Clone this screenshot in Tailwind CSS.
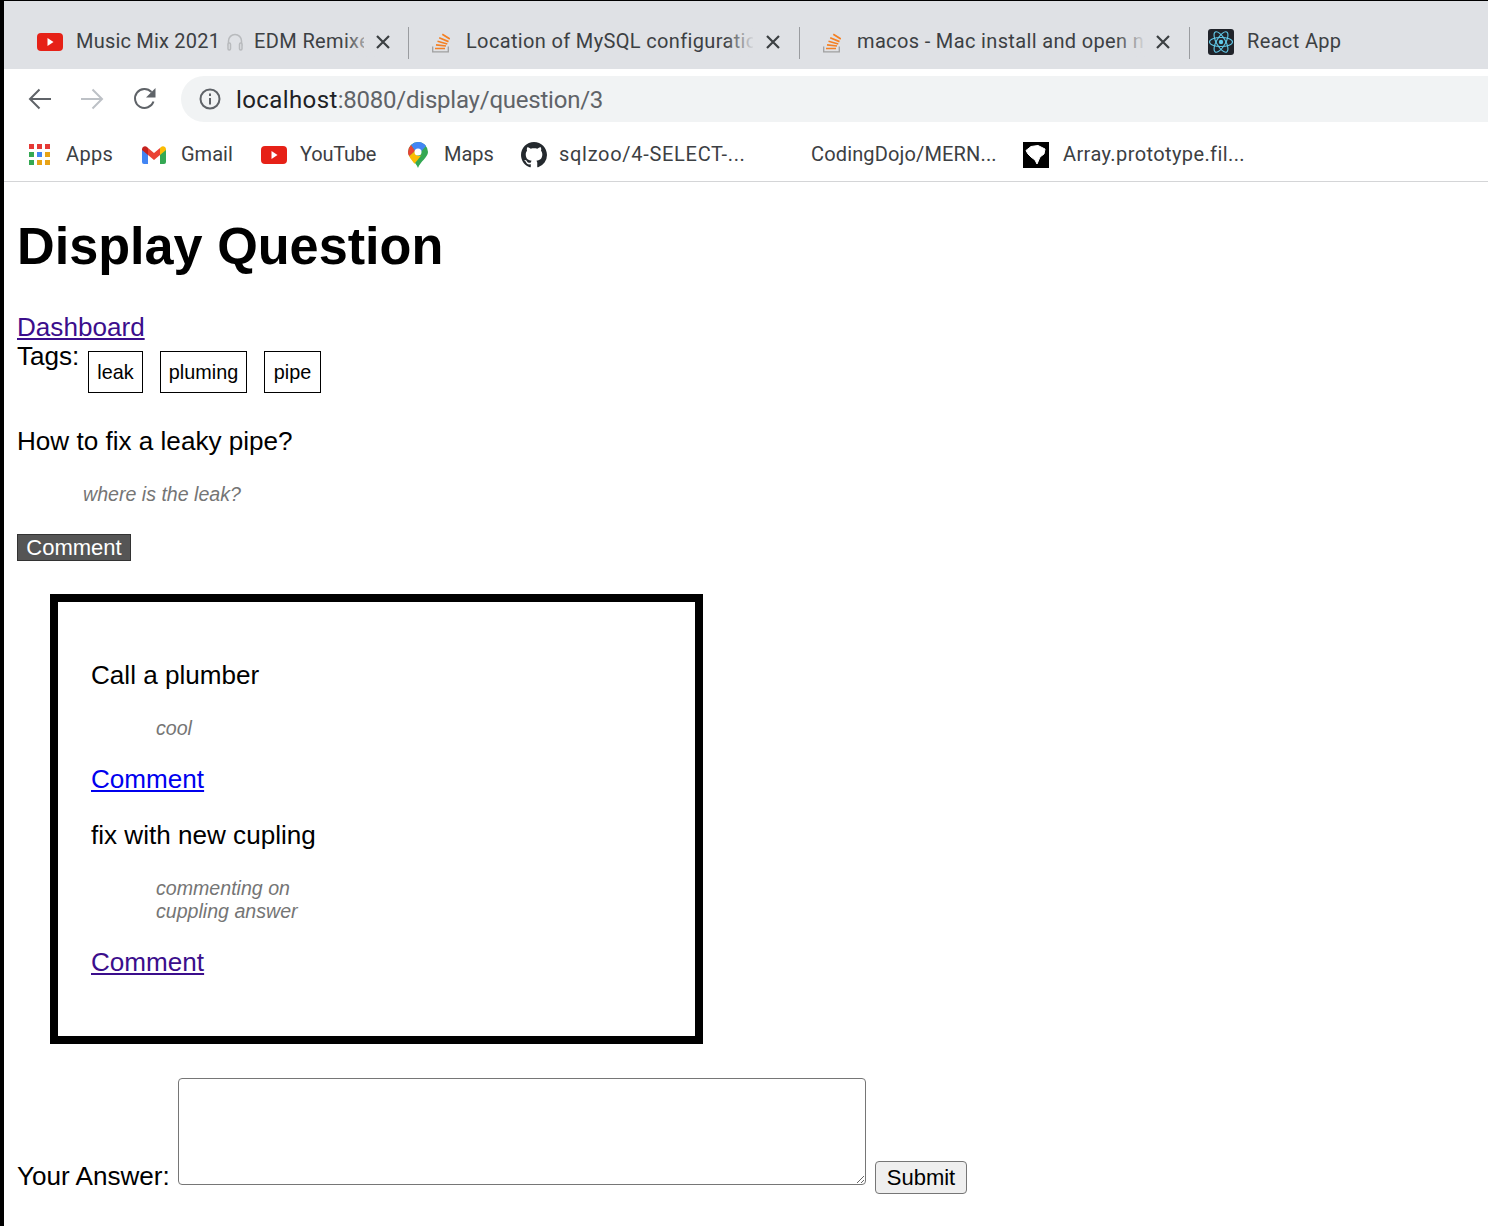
<!DOCTYPE html>
<html lang="en">
<head>
  <meta charset="UTF-8">
  <title>Display Question</title>
  <script src="https://cdn.jsdelivr.net/npm/@tailwindcss/browser@4"></script>
</head>
<body class="bg-black overflow-hidden">
  <div class="w-[1488px] h-[1226px] pl-1 pt-px">
    <div class="bg-white h-[1225px] overflow-hidden">
      <!-- tab strip -->
      <div class="h-[68px] bg-[#dfe1e5] flex pt-[26px] pl-[14px] font-['Roboto',sans-serif] text-[20px] text-[#3c4043] tracking-[0.35px]">
        <div class="w-[391px] h-[32px] shrink-0 flex items-center border-r border-[#9a9ca0] pl-[19px] pb-[2px] relative">
          <svg class="w-[26px] h-[18px] shrink-0" viewBox="0 0 26 18"><rect width="26" height="18" rx="4" fill="#e62117"/><path d="M10.500 5l6 4-6 4z" fill="#fff"/></svg>
          <span class="ml-[13px] mb-[2px] whitespace-nowrap tracking-[0.2px]">Music Mix 2021</span>
          <svg class="w-[18px] h-[20px] ml-[6px] shrink-0" viewBox="0 0 18 20" fill="none" stroke="#b8babd" stroke-width="1.500"><path d="M2.500 14V9a6.500 6.500 0 0113 0v5"/><rect x="2" y="11" width="2.500" height="7" rx="1.200" fill="#dfe1e5"/><rect x="13.500" y="11" width="2.500" height="7" rx="1.200" fill="#dfe1e5"/></svg>
          <span class="ml-[10px] mb-[2px] w-[110px] overflow-hidden whitespace-nowrap">EDM Remixes</span>
          <div class="absolute left-[326px] top-0 h-full w-[32px] bg-linear-to-r from-transparent to-[#dfe1e5]"></div>
          <svg class="absolute left-[358px] top-[8px] w-[14px] h-[14px]" viewBox="0 0 14 14" stroke="#3c4043" stroke-width="2.200"><path d="M1 1l12 12M13 1L1 13"/></svg>
        </div>
        <div class="w-[391px] h-[32px] shrink-0 flex items-center border-r border-[#9a9ca0] pl-[23px] pb-[2px] relative">
          <svg class="w-[18px] h-[22px] shrink-0" viewBox="0 0 18 22" fill="none"><path d="M.7 15.500v5.300h15.600v-5.300" stroke="#a0a0a0" stroke-width="1.300"/><path d="M3 17.500h10M4 13.800l10 1.200M5.500 10.300l9.800 2.700M7.200 6.800l9.300 3.800M10.300 3.300l7.500 4.700" stroke="#f48024" stroke-width="1.700"/></svg>
          <span class="ml-[16px] mb-[2px] w-[287px] overflow-hidden whitespace-nowrap">Location of MySQL configuration</span>
          <div class="absolute left-[316px] top-0 h-full w-[30px] bg-linear-to-r from-transparent to-[#dfe1e5]"></div>
          <svg class="absolute left-[357px] top-[8px] w-[14px] h-[14px]" viewBox="0 0 14 14" stroke="#3c4043" stroke-width="2.200"><path d="M1 1l12 12M13 1L1 13"/></svg>
        </div>
        <div class="w-[390px] h-[32px] shrink-0 flex items-center border-r border-[#9a9ca0] pl-[23px] pb-[2px] relative">
          <svg class="w-[18px] h-[22px] shrink-0" viewBox="0 0 18 22" fill="none"><path d="M.7 15.500v5.300h15.600v-5.300" stroke="#a0a0a0" stroke-width="1.300"/><path d="M3 17.500h10M4 13.800l10 1.200M5.500 10.300l9.800 2.700M7.200 6.800l9.300 3.800M10.300 3.300l7.500 4.700" stroke="#f48024" stroke-width="1.700"/></svg>
          <span class="ml-[16px] mb-[2px] w-[286px] overflow-hidden whitespace-nowrap">macos - Mac install and open new</span>
          <div class="absolute left-[316px] top-0 h-full w-[30px] bg-linear-to-r from-transparent to-[#dfe1e5]"></div>
          <svg class="absolute left-[356px] top-[8px] w-[14px] h-[14px]" viewBox="0 0 14 14" stroke="#3c4043" stroke-width="2.200"><path d="M1 1l12 12M13 1L1 13"/></svg>
        </div>
        <div class="h-[32px] flex items-center pl-[18px] pb-[2px]">
          <svg class="w-[26px] h-[26px] shrink-0" viewBox="0 0 26 26" fill="none" stroke="#61c8e8" stroke-width="1.100"><rect width="26" height="26" rx="3" fill="#20232a" stroke="none"/><ellipse cx="13" cy="13" rx="11.500" ry="4.500"/><ellipse cx="13" cy="13" rx="11.500" ry="4.500" transform="rotate(60 13 13)"/><ellipse cx="13" cy="13" rx="11.500" ry="4.500" transform="rotate(120 13 13)"/><circle cx="13" cy="13" r="2.200" fill="#61c8e8" stroke="none"/></svg>
          <span class="ml-[13px] mb-[2px] whitespace-nowrap">React App</span>
        </div>
      </div>

      <!-- toolbar -->
      <div class="h-[64px] flex pt-[7px] pl-[24px]">
        <svg class="w-[24px] h-[24px] mt-[11px] shrink-0" viewBox="0 0 24 24" fill="none" stroke="#5f6368" stroke-width="2"><path d="M23 12H2M11.500 2.500L2 12l9.500 9.500"/></svg>
        <svg class="w-[24px] h-[24px] mt-[11px] ml-[28px] shrink-0" viewBox="0 0 24 24" fill="none" stroke="#bdc1c6" stroke-width="2"><path d="M1 12h21M12.500 2.500L22 12l-9.500 9.500"/></svg>
        <svg class="w-[24px] h-[24px] mt-[11px] ml-[29px] shrink-0" viewBox="0 0 24 24" fill="none"><path d="M20.500 14.500A9.500 9.500 0 1118.500 5" stroke="#5f6368" stroke-width="2"/><path d="M22.500 1v9.500H13z" fill="#5f6368"/></svg>
        <div class="ml-[24px] w-full h-[46px] bg-[#f1f3f4] rounded-l-[23px] flex items-center pl-[18px] font-['Roboto',sans-serif] text-[24px] tracking-[0.4px]">
          <svg class="w-[22px] h-[22px] shrink-0" viewBox="0 0 22 22" fill="none" stroke="#5f6368" stroke-width="2"><circle cx="11" cy="11" r="9.500"/><path d="M11 10v6.500M11 5.500v2.500"/></svg>
          <span class="ml-[15px] mt-[2px] text-[#202124]">localhost</span><span class="mt-[2px] text-[#5f6368] tracking-[-0.23px]">:8080/display/question/3</span>
        </div>
      </div>

      <!-- bookmarks -->
      <div class="h-[49px] border-b border-[#d4d5d7] flex items-center font-['Roboto',sans-serif] text-[20px] text-[#3c4043] pl-[25px] pb-[4px]">
        <svg class="w-[22px] h-[22px] shrink-0" viewBox="0 0 22 22"><g fill="#e53935"><rect width="5" height="5"/><rect x="8" width="5" height="5"/><rect x="16" width="5" height="5"/></g><rect y="8" width="5" height="5" fill="#34a853"/><rect x="8" y="8" width="5" height="5" fill="#4285f4"/><rect x="16" y="8" width="5" height="5" fill="#e8a317"/><rect y="16" width="5" height="5" fill="#34a853"/><rect x="8" y="16" width="5" height="5" fill="#e8a317"/><rect x="16" y="16" width="5" height="5" fill="#e8a317"/></svg>
        <span class="ml-[15px] mb-[2px] w-[76px] shrink-0 tracking-[0.35px]">Apps</span>
        <svg class="w-[24px] h-[18px] shrink-0" viewBox="0 0 24 18"><path d="M0 3v13a2 2 0 002 2h4V7z" fill="#4285f4"/><path d="M24 3v13a2 2 0 01-2 2h-4V7z" fill="#34a853"/><path d="M6 9V2L12 7l6-5v7l-6 5z" fill="#ea4335"/><path d="M0 3a3 3 0 015-2l1 1v7L0 4z" fill="#c5221f"/><path d="M24 3a3 3 0 00-5-2l-1 1v7l6-5z" fill="#fbbc04"/></svg>
        <span class="ml-[15px] mb-[2px] w-[80px] shrink-0">Gmail</span>
        <svg class="w-[26px] h-[18px] shrink-0" viewBox="0 0 26 18"><rect width="26" height="18" rx="4" fill="#e62117"/><path d="M10.500 5l6 4-6 4z" fill="#fff"/></svg>
        <span class="ml-[13px] mb-[2px] w-[108px] shrink-0 tracking-[-0.2px]">YouTube</span>
        <svg class="w-[20px] h-[26px] shrink-0" viewBox="0 0 20 26"><path d="M10 26C8 20 0 15 0 10A10 10 0 0120 10c0 5-8 10-10 16z" fill="#34a853"/><path d="M3 3A10 10 0 0118 4l-5 5.500a4 4 0 00-6-.5z" fill="#4285f4"/><path d="M3 3a10 10 0 00-3 7c0 1.500.4 3 1.200 4.300L7 9z" fill="#ea4335"/><path d="M1.200 14.300c1.300 2.500 3.500 5 5.300 7.500L14 12.500a4 4 0 01-7-3.500z" fill="#fbbc04"/><circle cx="10" cy="10" r="3.500" fill="#fff"/></svg>
        <span class="ml-[16px] mb-[2px] w-[77px] shrink-0">Maps</span>
        <svg class="w-[26px] h-[26px] shrink-0" viewBox="0 0 16 16"><path fill="#24292e" d="M8 0C3.58 0 0 3.58 0 8c0 3.54 2.29 6.53 5.47 7.59.4.07.55-.17.55-.38 0-.19-.01-.82-.01-1.490-2.010.37-2.530-.49-2.690-.94-.09-.23-.48-.94-.82-1.130-.28-.15-.68-.52-.01-.53.63-.01 1.080.58 1.230.82.72 1.210 1.870.87 2.330.66.07-.52.28-.87.51-1.070-1.780-.2-3.640-.89-3.640-3.950 0-.87.31-1.590.82-2.150-.08-.2-.36-1.020.08-2.120 0 0 .67-.21 2.200.82.64-.18 1.320-.27 2-.27.68 0 1.360.09 2 .27 1.530-1.040 2.200-.82 2.200-.82.44 1.100.16 1.920.08 2.120.51.56.82 1.270.82 2.150 0 3.070-1.870 3.750-3.650 3.950.29.25.54.73.54 1.480 0 1.070-.01 1.930-.01 2.200 0 .21.15.46.55.38A8.013 8.013 0 0016 8c0-4.420-3.580-8-8-8z"/></svg>
        <span class="ml-[12px] mb-[2px] w-[252px] shrink-0 tracking-[0.7px]">sqlzoo/4-SELECT-...</span>
        <span class="mb-[2px] w-[212px] shrink-0 tracking-[0.15px]">CodingDojo/MERN...</span>
        <svg class="w-[26px] h-[26px] shrink-0" viewBox="0 0 26 26"><rect width="26" height="26" fill="#000"/><path d="M3 8.500L8 4.500l7-1 7 3.500-1 5-4 3-3 7-2-4-4-3-3-3z" fill="#fff" stroke="#fff" stroke-linejoin="round"/></svg>
        <span class="ml-[14px] mb-[2px] whitespace-nowrap tracking-[0.4px]">Array.prototype.fil...</span>
      </div>

      <!-- page -->
      <main class="pl-[13px] font-['Liberation_Sans',Arial,sans-serif] text-black text-[26.1px] leading-[30px]">
        <h1 class="text-[52.2px] font-bold leading-[64px] pt-[32px]">Display Question</h1>
        <a href="#" class="block mt-[34px] w-fit text-[#3b0e8c] underline">Dashboard</a>
        <div class="flex items-start">
          <span class="w-[71px] -mt-px">Tags:</span>
          <span class="border border-black h-[42px] w-[55px] flex items-center justify-center text-[19.8px] mt-[9px]">leak</span>
          <span class="border border-black h-[42px] w-[87px] flex items-center justify-center text-[19.8px] mt-[9px] ml-[17px]">pluming</span>
          <span class="border border-black h-[42px] w-[57px] flex items-center justify-center text-[19.8px] mt-[9px] ml-[17px]">pipe</span>
        </div>
        <p class="mt-[33px]">How to fix a leaky pipe?</p>
        <p class="mt-[26px] ml-[66px] text-[19.6px] leading-[24px] italic text-[#757575]">where is the leak?</p>
        <button class="block mt-[28px] w-[114px] h-[27px] bg-[#555] border border-[#333] text-white text-[22px] leading-[25px]">Comment</button>

        <section class="mt-[33px] ml-[33px] w-[653px] h-[450px] border-8 border-black pl-[33px] pt-[58px]">
          <p>Call a plumber</p>
          <p class="mt-[27px] ml-[65px] w-[200px] text-[19.6px] leading-[23px] italic text-[#757575]">cool</p>
          <a href="#" class="block w-fit mt-[24px] text-[#0000ee] underline">Comment</a>
          <p class="mt-[26px]">fix with new cupling</p>
          <p class="mt-[27px] ml-[65px] w-[200px] text-[19.6px] leading-[23px] italic text-[#757575]">commenting on cuppling answer</p>
          <a href="#" class="block w-fit mt-[24px] text-[#3b0e8c] underline">Comment</a>
        </section>

        <form class="flex items-end mt-[34px]">
          <label class="w-[161px] shrink-0 -mb-[6px] whitespace-nowrap">Your Answer:</label>
          <textarea class="w-[688px] h-[107px] shrink-0 border border-[#767676] rounded-[4px] resize-y"></textarea>
          <button type="button" class="ml-[9px] -mb-[9px] w-[92px] h-[33px] bg-[#efefef] border border-[#767676] rounded-[4px] text-[22px] leading-[30px]">Submit</button>
        </form>
      </main>
    </div>
  </div>
</body>
</html>
